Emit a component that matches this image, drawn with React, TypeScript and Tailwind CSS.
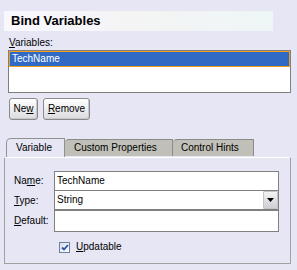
import React from "react";

const U = ({ children }: { children: React.ReactNode }) => <span className="underline underline-offset-[1px]">{children}</span>;

export default function App() {
  return (
    <div
      className="w-[297px] h-[270px] bg-[#e6e6f5] text-black text-[10px] leading-[12px] overflow-hidden flex flex-col"
      style={{ fontFamily: '"Liberation Sans", Arial, sans-serif' }}
    >
      <div className="mt-[11px] ml-[4px] w-[269px] h-[20px] bg-gradient-to-r from-[#f8f8ff] via-[#f4f4f4] to-[#eef6f6] pl-[7px] flex items-center">
        <span className="font-bold text-[13px] leading-[16px]">Bind Variables</span>
      </div>
      <div className="mt-[6px] ml-[9px] h-[12px]">
        <U>V</U>ariables:
      </div>
      <div className="mt-[1px] ml-[8px] w-[283px] h-[43px] border border-[#7f7f7f] bg-white">
        <div className="h-[16px] bg-[#316ac5] border border-[#f0a020] text-white pl-[2px] leading-[14px] text-[10px]">
          TechName
        </div>
      </div>
      <div className="mt-[5px] ml-[9px] flex gap-[5px]">
        <button className="w-[29px] h-[22px] rounded-[3px] border border-[#8a8a8a] bg-gradient-to-b from-white to-[#dcdce0] text-[10px] leading-[12px] shadow-[inset_-1px_-1px_0_#c8c8cc]">
          Ne<U>w</U>
        </button>
        <button className="w-[47px] h-[22px] rounded-[3px] border border-[#8a8a8a] bg-gradient-to-b from-white to-[#dcdce0] text-[10px] leading-[12px] shadow-[inset_-1px_-1px_0_#c8c8cc]">
          <U>R</U>emove
        </button>
      </div>
      <div className="mt-[19px] ml-[6px] flex items-end h-[18px] relative z-10">
        <div className="relative w-[59px] h-[19px] bg-[#e6e6f5] border-t border-l border-r border-[#919191] rounded-tl-[5px] pl-[9px] leading-[17px] text-[10px]">
          Variable
        </div>
        <div className="w-[108px] h-[17px] bg-[#c0c0b8] border-t border-r border-[#8a8a8a] rounded-tl-[4px] pl-[9px] leading-[16px] text-[10px] mb-[1px]">
          Custom Properties
        </div>
        <div className="w-[81px] h-[17px] bg-[#c0c0b8] border-t border-r border-[#8a8a8a] rounded-tl-[4px] pl-[8px] leading-[16px] text-[10px] mb-[1px]">
          Control Hints
        </div>
      </div>
      <div className="ml-[4px] w-[287px] h-[107px] border border-[#a0a0a0] border-t-white relative pl-[9px] pt-[13px]">
        <div className="flex items-center h-[20px]">
          <div className="w-[40px]">Na<U>m</U>e:</div>
          <div className="w-[225px] h-[20px] border border-[#808080] bg-white pl-[2px] leading-[18px]">TechName</div>
        </div>
        <div className="flex items-center h-[19px]">
          <div className="w-[40px]"><U>T</U>ype:</div>
          <div className="w-[225px] h-[20px] -mt-[1px] border border-[#808080] bg-white pl-[2px] leading-[18px] flex">
            <span className="flex-1">String</span>
            <div className="w-[15px] h-[18px] bg-gradient-to-b from-[#f4f4f4] to-[#cfcfd4] border border-[#c4c4c8] rounded-[1px] flex items-center justify-center">
              <svg width="7" height="4" viewBox="0 0 7 4"><path d="M0 0h7L3.5 4z" fill="#000" /></svg>
            </div>
          </div>
        </div>
        <div className="flex items-center h-[22px]">
          <div className="w-[40px]"><U>D</U>efault:</div>
          <div className="w-[225px] h-[22px] border border-[#808080] bg-white"></div>
        </div>
        <div className="mt-[9px] ml-[45px] flex items-center gap-[6px]">
          <div className="w-[11px] h-[11px] border border-[#6b7fa0] bg-gradient-to-br from-[#dcdce8] to-white flex items-center justify-center">
            <svg width="8" height="7" viewBox="0 0 8 7"><path d="M1 3.5l2 2L7 1" stroke="#2155b8" strokeWidth="1.8" fill="none" /></svg>
          </div>
          <span><U>U</U>pdatable</span>
        </div>
      </div>
    </div>
  );
}
